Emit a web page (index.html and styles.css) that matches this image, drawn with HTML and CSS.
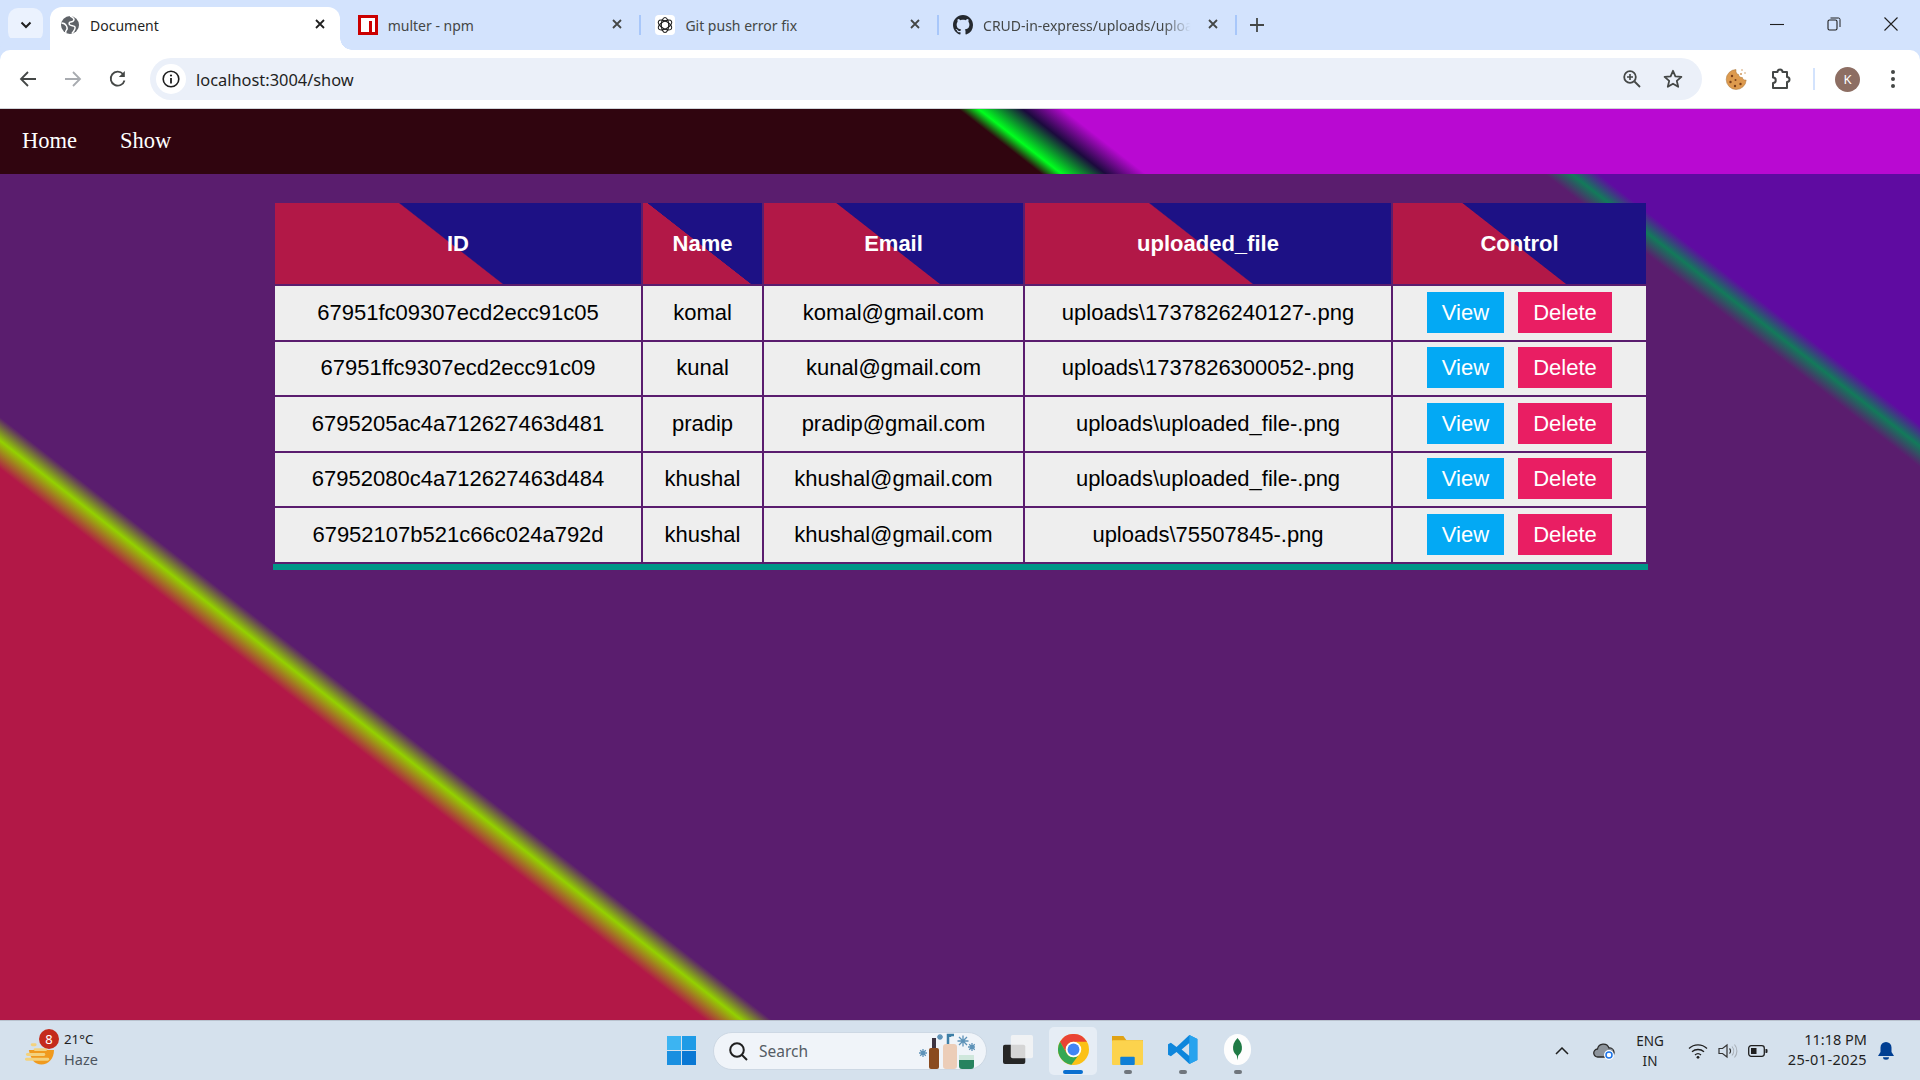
FILE: index.html
```html
<!DOCTYPE html>
<html lang="en">
<head>
<meta charset="utf-8">
<title>Document</title>
<link rel="stylesheet" href="styles.css">
</head>
<body>
<header class="browser">
  <div class="tabstrip">
    <div class="tab-menu">
      <svg class="ic16" viewBox="0 0 16 16"><path d="M3.5 5.5 8 10l4.5-4.5" fill="none" stroke="#1f1f1f" stroke-width="2"/></svg>
    </div>
    <div class="tabs">
      <div class="tab active">
        <svg class="favicon" viewBox="0 0 20 20"><circle cx="10" cy="10" r="9" fill="#5f6368"/><path d="M10 1c2 1 4 2 4 3.500S12 7 10.500 7 8.500 9 10 10s4.500.5 5 2-1 4-3 6.500M1.500 8c2 0 4 1 5 3s1 3 0 4-1 2-.500 3" fill="none" stroke="#fff" stroke-width="1.500"/></svg>
        <span class="tab-title">Document</span>
        <svg class="tab-close" viewBox="0 0 12 12"><path d="M2 2l8 8M10 2l-8 8" stroke="#1f1f1f" stroke-width="1.800"/></svg>
      </div>
      <div class="tab sep">
        <svg class="favicon" viewBox="0 0 20 20"><path d="M0 0h20v20H0z" fill="#cb0000"/><path d="M3 3h14v14h-3V6h-3v11H3z" fill="#fff"/></svg>
        <span class="tab-title">multer - npm</span>
        <svg class="tab-close" viewBox="0 0 12 12"><path d="M2 2l8 8M10 2l-8 8" stroke="#444746" stroke-width="1.800"/></svg>
      </div>
      <div class="tab sep">
        <svg class="favicon" viewBox="0 0 20 20"><rect width="20" height="20" rx="4" fill="#fff"/><g fill="none" stroke="#222" stroke-width="1.100"><ellipse cx="10" cy="10" rx="3.700" ry="7.500"/><ellipse cx="10" cy="10" rx="3.700" ry="7.500" transform="rotate(60 10 10)"/><ellipse cx="10" cy="10" rx="3.700" ry="7.500" transform="rotate(120 10 10)"/></g></svg>
        <span class="tab-title">Git push error fix</span>
        <svg class="tab-close" viewBox="0 0 12 12"><path d="M2 2l8 8M10 2l-8 8" stroke="#444746" stroke-width="1.800"/></svg>
      </div>
      <div class="tab sep">
        <svg class="favicon" viewBox="0 0 16 16"><path fill="#24292f" d="M8 0C3.580 0 0 3.580 0 8c0 3.540 2.290 6.530 5.470 7.590.400.070.550-.170.550-.380 0-.190-.010-.820-.010-1.490-2.010.370-2.530-.490-2.690-.940-.090-.230-.480-.940-.820-1.130-.280-.150-.680-.520-.010-.530.630-.010 1.080.580 1.230.820.720 1.210 1.870.870 2.330.660.070-.520.280-.870.510-1.070-1.780-.200-3.640-.890-3.640-3.950 0-.870.310-1.590.820-2.150-.080-.200-.360-1.020.080-2.120 0 0 .670-.210 2.200.820.640-.180 1.320-.270 2-.270.680 0 1.360.090 2 .270 1.530-1.040 2.200-.820 2.200-.820.440 1.100.160 1.920.080 2.120.510.560.820 1.270.820 2.150 0 3.070-1.870 3.750-3.650 3.950.290.250.540.730.540 1.480 0 1.070-.010 1.930-.010 2.200 0 .210.150.460.550.380A8.013 8.013 0 0016 8c0-4.420-3.580-8-8-8z"/></svg>
        <span class="tab-title fade">CRUD-in-express/uploads/uploa</span>
        <svg class="tab-close" viewBox="0 0 12 12"><path d="M2 2l8 8M10 2l-8 8" stroke="#444746" stroke-width="1.800"/></svg>
      </div>
      <svg class="tab-new" viewBox="0 0 14 14"><path d="M7 0v14M0 7h14" stroke="#444746" stroke-width="1.800"/></svg>
    </div>
    <div class="win-controls">
      <svg class="win-ic" viewBox="0 0 14 14"><path d="M0 7.500h14" stroke="#1f1f1f" stroke-width="1.100"/></svg>
      <svg class="win-ic" viewBox="0 0 14 14"><rect x="1" y="3" width="9" height="10" rx="1.500" fill="none" stroke="#1f1f1f" stroke-width="1.100"/><path d="M3.500 1h8A1.500 1.500 0 0 1 13 2.500V10" fill="none" stroke="#1f1f1f" stroke-width="1"/></svg>
      <svg class="win-ic" viewBox="0 0 14 14"><path d="M.5.5l13 13M13.500.5l-13 13" stroke="#1f1f1f" stroke-width="1.100"/></svg>
    </div>
  </div>
  <div class="toolbar">
    <div class="nav-btns">
      <svg class="ic18" viewBox="0 0 18 18"><path d="M17 9H2.500M9 2 2 9l7 7" fill="none" stroke="#444746" stroke-width="1.800"/></svg>
      <svg class="ic18" viewBox="0 0 18 18"><path d="M1 9h14.500M9 2l7 7-7 7" fill="none" stroke="#a8abb0" stroke-width="1.800"/></svg>
      <svg class="ic18" viewBox="0 0 18 18"><path d="M15.500 10.500A7 7 0 1 1 14 4" fill="none" stroke="#444746" stroke-width="1.800"/><path d="M15.800 1v6h-6z" fill="#444746"/></svg>
    </div>
    <div class="omnibox">
      <div class="chip">
        <svg class="ic18" viewBox="0 0 18 18"><circle cx="9" cy="9" r="7.800" fill="none" stroke="#1f1f1f" stroke-width="1.600"/><path d="M9 8v5.500" stroke="#1f1f1f" stroke-width="1.800"/><circle cx="9" cy="5.500" r="1.100" fill="#1f1f1f"/></svg>
      </div>
      <span class="url">localhost:3004/show</span>
      <div class="omni-end">
        <svg class="ic20" viewBox="0 0 20 20"><circle cx="8" cy="8" r="5.800" fill="none" stroke="#444746" stroke-width="1.800"/><path d="M12.500 12.500 18 18" stroke="#444746" stroke-width="1.800"/><path d="M8 5v6M5 8h6" stroke="#444746" stroke-width="1.600"/></svg>
        <svg class="ic20" viewBox="0 0 20 20"><path d="M10 1.800l2.400 5.600 6 .5-4.600 4 1.400 5.900L10 14.700l-5.200 3.100 1.400-5.900-4.600-4 6-.5z" fill="none" stroke="#444746" stroke-width="1.800" stroke-linejoin="round"/></svg>
      </div>
    </div>
    <div class="tool-end">
      <svg class="ic24" viewBox="0 0 24 24"><path d="M12 2.500a10 10 0 1 0 10.200 10.500c-2 .4-3.600-.8-3.800-2.500-2 .2-3.700-1-3.800-3-1.800 0-3-2.200-2.600-5z" fill="#dd9a4e" stroke="#a5743b" stroke-width=".5"/><g fill="#7a3f1a"><circle cx="8" cy="9" r="1.200"/><circle cx="6.500" cy="15" r="1.200"/><circle cx="11.500" cy="13" r="1"/><circle cx="11" cy="19" r="1.200"/><circle cx="16.500" cy="17" r="1.200"/></g><g fill="#cf9b62"><circle cx="18" cy="3" r=".8"/><circle cx="21" cy="6" r=".8"/><circle cx="17" cy="7" r="1"/></g></svg>
      <svg class="ic22" viewBox="0 0 22 22"><path d="M4 4h4.500a2.500 2.500 0 0 1 5 0H18v5a2.500 2.500 0 0 1 0 5v6H4v-5a2.500 2.500 0 0 0 0-5.500z" fill="none" stroke="#444746" stroke-width="2" stroke-linejoin="round"/></svg>
      <span class="tool-sep"></span>
      <span class="avatar">K</span>
      <svg class="dots" viewBox="0 0 4 18"><circle cx="2" cy="2" r="2" fill="#444746"/><circle cx="2" cy="9" r="2" fill="#444746"/><circle cx="2" cy="16" r="2" fill="#444746"/></svg>
    </div>
  </div>
</header>

<nav class="site-nav">
  <a class="site-link">Home</a>
  <a class="site-link">Show</a>
</nav>

<main class="page">
  <table class="data">
    <colgroup>
      <col class="c-id"><col class="c-name"><col class="c-email"><col class="c-file"><col class="c-ctrl">
    </colgroup>
    <thead>
      <tr><th>ID</th><th>Name</th><th>Email</th><th>uploaded_file</th><th>Control</th></tr>
    </thead>
    <tbody>
      <tr><td>67951fc09307ecd2ecc91c05</td><td>komal</td><td>komal@gmail.com</td><td>uploads\1737826240127-.png</td><td><div class="actions"><a class="btn view">View</a><a class="btn del">Delete</a></div></td></tr>
      <tr><td>67951ffc9307ecd2ecc91c09</td><td>kunal</td><td>kunal@gmail.com</td><td>uploads\1737826300052-.png</td><td><div class="actions"><a class="btn view">View</a><a class="btn del">Delete</a></div></td></tr>
      <tr><td>6795205ac4a712627463d481</td><td>pradip</td><td>pradip@gmail.com</td><td>uploads\uploaded_file-.png</td><td><div class="actions"><a class="btn view">View</a><a class="btn del">Delete</a></div></td></tr>
      <tr><td>67952080c4a712627463d484</td><td>khushal</td><td>khushal@gmail.com</td><td>uploads\uploaded_file-.png</td><td><div class="actions"><a class="btn view">View</a><a class="btn del">Delete</a></div></td></tr>
      <tr><td>67952107b521c66c024a792d</td><td>khushal</td><td>khushal@gmail.com</td><td>uploads\75507845-.png</td><td><div class="actions"><a class="btn view">View</a><a class="btn del">Delete</a></div></td></tr>
    </tbody>
  </table>
</main>

<footer class="taskbar">
  <div class="weather">
    <div class="weather-icon">
      <svg class="weather-svg" viewBox="0 0 30 26"><path d="M4 10h26c0 9-6 15-13 15S6 20 4 10z" fill="#f09a1e"/><g fill="#f3d27e"><rect x="6" y="3" width="6" height="3" rx="1.500"/><rect x="9" y="8" width="14" height="3" rx="1.500"/><rect x="1" y="13" width="20" height="3" rx="1.500"/><rect x="0" y="18" width="25" height="3" rx="1.500"/></g></svg>
      <span class="badge">8</span>
    </div>
    <div class="weather-text"><span class="temp">21°C</span><span class="cond">Haze</span></div>
  </div>
  <div class="task-center">
    <svg class="winlogo" viewBox="0 0 29 29"><rect width="14" height="14" fill="#3cb4f2"/><rect x="15" width="14" height="14" fill="#1f9be6"/><rect y="15" width="14" height="14" fill="#1a8fe0"/><rect x="15" y="15" width="14" height="14" fill="#0a78d4"/></svg>
    <div class="search">
      <svg class="search-ic" viewBox="0 0 20 20"><circle cx="9" cy="9" r="6.800" fill="none" stroke="#1f1f1f" stroke-width="2"/><path d="M14 14l5 5" stroke="#1f1f1f" stroke-width="2"/></svg>
      <span class="search-text">Search</span>
      <svg class="search-art" viewBox="0 0 56 36"><rect x="10" y="15" width="10" height="21" rx="2" fill="#8a4a1e"/><rect x="13" y="5" width="4" height="10" fill="#3d3340"/><rect x="24" y="11" width="14" height="25" rx="3" fill="#eccdb8"/><path d="M29 11V2h6M31 2v2" stroke="#3c7ea6" stroke-width="2.500" fill="none"/><rect x="40" y="22" width="15" height="14" rx="3" fill="#27835f"/><rect x="40" y="22" width="15" height="5" fill="#cfe7dc"/><g stroke="#5d92b8" stroke-width="1.300" fill="none"><path d="M4 16v8M0 20h8M1.200 17.200l5.600 5.600M6.800 17.200l-5.600 5.600"/><path d="M21 1v6M18 4h6M19 2l4 4M23 2l-4 4"/><path d="M44 2.500v11M38.500 8h11M40 4l8 8M48 4l-8 8"/><path d="M53 10v8M49 14h7M50.200 11.200l5.600 5.600M55.800 11.200l-5.600 5.600"/></g></svg>
    </div>
    <div class="task-apps">
      <div class="app">
        <svg class="app-ic" viewBox="0 0 32 30"><rect x="0" y="10" width="23" height="20" rx="2" fill="#262626"/><rect x="8" y="0" width="23" height="24" rx="2" fill="#f4f4f4" opacity=".85"/></svg>
      </div>
      <div class="app current">
        <svg class="app-ic" viewBox="0 0 24 24"><circle cx="12" cy="12" r="12" fill="#fbc116"/><path d="M1.600 6A12 12 0 0 1 22.400 6H12a6 6 0 0 0-5.200 9z" fill="#ea4335"/><path d="M1.600 6A12 12 0 0 0 10.400 23.900L15.600 16.800A6 6 0 0 1 6.800 15z" fill="#34a853"/><circle cx="12" cy="12" r="6" fill="#fff"/><circle cx="12" cy="12" r="4.600" fill="#4285f4"/></svg>
        <span class="run long"></span>
      </div>
      <div class="app">
        <svg class="app-ic" viewBox="0 0 30 30"><path d="M0 2h11l3 4H30v4H0z" fill="#e0a215"/><rect y="6" width="30" height="24" rx="1" fill="#fcd34d"/><rect x="8" y="22" width="14" height="8" rx="1" fill="#0f7fd6"/></svg>
        <span class="run"></span>
      </div>
      <div class="app">
        <svg class="app-ic" viewBox="0 0 24 24"><path fill-rule="evenodd" d="M17.300.800 23.500 3.800V20.200L17.300 23.200 7.400 13.900 3 17.200 .800 16V8L3 6.800 7.400 10.100zM17.300 7 11.300 12 17.300 17z" fill="#0e86dc"/><path d="M17.300.800 23.500 3.800V20.200L17.300 23.200z" fill="#28a3ee"/></svg>
        <span class="run"></span>
      </div>
      <div class="app">
        <svg class="app-ic" viewBox="0 0 28 32"><ellipse cx="14" cy="16" rx="14" ry="16" fill="#fdfdfd"/><path d="M14 4c4 4 5 8 4.500 12-.4 3-2.500 5-3.800 6.500L14 27l-.7-4.500C12 21 9.900 19 9.500 16 9 12 10 8 14 4z" fill="#1f7a45"/></svg>
        <span class="run"></span>
      </div>
    </div>
  </div>
  <div class="tray">
    <svg class="tray-chev" viewBox="0 0 14 8"><path d="M1 7l6-6 6 6" fill="none" stroke="#1f1f1f" stroke-width="1.500"/></svg>
    <svg class="tray-cloud" viewBox="0 0 22 18"><path d="M5 15a4 4 0 0 1-.5-8A6 6 0 0 1 16 6a4.500 4.500 0 0 1 1 9z" fill="#8d949c" stroke="#2b2b2b" stroke-width="1.300"/><circle cx="16" cy="13" r="5" fill="#fff"/><circle cx="16" cy="13" r="3" fill="none" stroke="#1a73e8" stroke-width="1.500"/></svg>
    <div class="lang"><span>ENG</span><span>IN</span></div>
    <svg class="tray-ic" viewBox="0 0 20 16"><path d="M1 5.500a13 13 0 0 1 18 0M4 8.800a9 9 0 0 1 12 0M7 12a4.500 4.500 0 0 1 6 0" fill="none" stroke="#1f1f1f" stroke-width="1.300"/><circle cx="10" cy="14.300" r="1.400" fill="#1f1f1f"/></svg>
    <svg class="tray-ic" viewBox="0 0 20 16"><path d="M1 5.500h3.500L9 2v12L4.500 10.500H1z" fill="none" stroke="#333" stroke-width="1.200"/><path d="M11.500 5.500a3.500 3.500 0 0 1 0 5" fill="none" stroke="#333" stroke-width="1.200"/><path d="M14 3.500a7 7 0 0 1 0 9M16.500 1.500a10 10 0 0 1 0 13" fill="none" stroke="#a9b0b8" stroke-width="1.100"/></svg>
    <svg class="tray-ic" viewBox="0 0 20 12"><rect x=".7" y=".7" width="15.600" height="10.600" rx="2.500" fill="none" stroke="#1f1f1f" stroke-width="1.300"/><rect x="3" y="3" width="5.500" height="6" fill="#1f1f1f"/><path d="M17.500 4h1a1 1 0 0 1 1 1v2a1 1 0 0 1-1 1h-1z" fill="#1f1f1f"/></svg>
    <div class="clock"><span>11:18 PM</span><span class="date">25-01-2025</span></div>
    <svg class="bell" viewBox="0 0 16 18"><path d="M8 0a5.500 5.500 0 0 1 5.500 5.500V10L16 14H0l2.500-4V5.500A5.500 5.500 0 0 1 8 0z" fill="#003e92"/><path d="M5 15.300h6a3 2.500 0 0 1-6 0z" fill="#003e92"/></svg>
  </div>
</footer>
</body>
</html>
```

FILE: styles.css
```css
* { box-sizing: border-box; }
html, body { height: 100%; }
body {
  margin: 0;
  height: 1080px;
  overflow: hidden;
  display: flex;
  flex-direction: column;
  font-family: "Liberation Sans", Arial, sans-serif;
}

/* browser chrome */
.browser { flex: none; font-family: "Noto Sans", sans-serif; }
.tabstrip {
  height: 50px;
  background: #d3e3fd;
  display: flex;
  position: relative;
}
.tab-menu {
  width: 35px;
  height: 34px;
  margin: 8px 0 0 8px;
  border-radius: 10px;
  background: #ebf2fe;
  display: flex;
  align-items: center;
  justify-content: center;
  flex: none;
}
.ic16 { width: 16px; height: 16px; }
.tabs { display: flex; margin-left: 1px; flex: 1; }
.tab {
  width: 297.700px;
  flex: none;
  height: 50px;
  display: flex;
  align-items: center;
  padding: 0 16px 0 16px;
  position: relative;
  color: #444746;
  font-size: 14px;
}
.tab.active { color: #1f1f1f; z-index: 1; }
.tab.active::before {
  content: "";
  position: absolute;
  left: 6px;
  right: 2px;
  top: 7px;
  bottom: 0;
  background: #fff;
  border-radius: 12px 12px 0 0;
  z-index: -1;
}
.tab.active::after {
  content: "";
  position: absolute;
  right: -10px;
  bottom: 0;
  width: 12px;
  height: 12px;
  background: radial-gradient(circle at 100% 0, transparent 11.500px, #fff 12px);
}
.tab.sep::after {
  content: "";
  position: absolute;
  right: -2px;
  top: 15px;
  height: 20px;
  width: 2px;
  background: #a8c7fa;
}
.favicon { width: 20px; height: 20px; flex: none; }
.tab-title {
  margin-left: 10px;
  flex: 1;
  white-space: nowrap;
  overflow: hidden;
}
.tab-title.fade {
  -webkit-mask-image: linear-gradient(to right, #000 84%, transparent 97%);
  mask-image: linear-gradient(to right, #000 84%, transparent 97%);
}
.tab-close { width: 12px; height: 12px; flex: none; margin-left: 10px; margin-top: -2px; }
.tab-new { width: 14px; height: 14px; margin: 18px 0 0 15px; flex: none; }
.win-controls {
  display: flex;
  align-items: center;
  gap: 43px;
  padding: 0 22px 3px 0;
  flex: none;
  position: absolute;
  right: 0;
  top: 0;
  height: 50px;
}
.win-ic { width: 14px; height: 14px; }

.toolbar {
  height: 59px;
  background: #fff;
  border-bottom: 1px solid #d0d3d8;
  border-radius: 10px 10px 0 0;
  display: flex;
  align-items: flex-start;
  position: relative;
  box-shadow: 0 -12px 0 0 #d3e3fd;
}
.nav-btns {
  display: flex;
  gap: 27px;
  width: 150px;
  height: 58px;
  align-items: center;
  padding-left: 19px;
  flex: none;
}
.ic18 { width: 18px; height: 18px; flex: none; }
.ic20 { width: 20px; height: 20px; flex: none; }
.ic22 { width: 22px; height: 22px; flex: none; }
.ic24 { width: 24px; height: 24px; flex: none; }
.omnibox {
  width: 1552px;
  height: 42px;
  margin-top: 8px;
  background: #ebf0f9;
  border-radius: 21px;
  display: flex;
  align-items: center;
  padding-left: 6px;
  flex: none;
}
.chip {
  width: 30px;
  height: 30px;
  background: #fff;
  border-radius: 50%;
  display: flex;
  align-items: center;
  justify-content: center;
  flex: none;
}
.url { margin-left: 10px; font-size: 16.400px; color: #1f1f1f; }
.omni-end {
  margin-left: auto;
  display: flex;
  gap: 21px;
  padding-right: 19px;
  align-items: center;
}
.tool-end {
  display: flex;
  align-items: center;
  height: 58px;
  padding-left: 22px;
  flex: 1;
}
.tool-end .ic22 { margin-left: 21px; }
.tool-sep {
  width: 2px;
  height: 22px;
  background: #d3e3fd;
  margin-left: 22px;
}
.avatar {
  width: 25px;
  height: 25px;
  border-radius: 50%;
  background: #8d6e63;
  color: #fff;
  font-size: 13px;
  display: flex;
  align-items: center;
  justify-content: center;
  margin-left: 20px;
}
.dots { width: 4px; height: 18px; margin-left: 31px; }

/* site nav */
.site-nav {
  flex: none;
  height: 65px;
  display: flex;
  align-items: center;
  gap: 43px;
  padding: 0 0 2px 22px;
  background: linear-gradient(38deg, #30050f 52%, #00ff1e 53%, #1c0a3e 55.200%, #b909d2 57.200%);
}
.site-link {
  font-family: "Liberation Serif", "Times New Roman", serif;
  font-size: 22.500px;
  color: #fff;
}

/* main page */
.page {
  flex: 1;
  min-height: 0;
  padding: 27px 0 0 273px;
  background: linear-gradient(38deg, #b21847 23.500%, #93d100 24.700%, #5a1d6e 25.700%, #5a1d6e 87.500%, #127a5a 88.400%, #5f0ba1 89.300%);
}
.data {
  width: 1375px;
  table-layout: fixed;
  border-collapse: separate;
  border-spacing: 2px;
  border-bottom: 6px solid #009688;
  font-size: 22px;
}
.c-id { width: 366px; }
.c-name { width: 119px; }
.c-email { width: 259px; }
.c-file { width: 366px; }
.c-ctrl { width: 253px; }
.data th {
  height: 81px;
  padding: 0;
  color: #fff;
  font-weight: 700;
  background: linear-gradient(38deg, #b21847 48.300%, #1d1185 48.700%);
}
.data td {
  padding: 0;
  text-align: center;
  background: #eee;
  color: #000;
}
.data tbody tr:nth-child(odd) td { height: 54px; }
.data tbody tr:nth-child(even) td { height: 53px; padding-bottom: 2px; }
.data tbody tr:nth-child(odd) .actions { margin-bottom: 1px; }
.actions { display: flex; justify-content: center; gap: 14px; }
.btn {
  height: 41px;
  display: flex;
  align-items: center;
  justify-content: center;
  color: #fff;
}
.view { width: 77px; background: #03a9f4; }
.del { width: 94px; background: #e91e63; }

/* taskbar */
.taskbar {
  flex: none;
  height: 60px;
  background: #d5e1ed;
  border-top: 1px solid #b9c2ce;
  display: flex;
  font-family: "Noto Sans", sans-serif;
  color: #1f1f1f;
}
.weather {
  width: 667px;
  flex: none;
  display: flex;
  align-items: center;
  padding-left: 25px;
}
.weather-icon { position: relative; width: 29px; height: 26px; margin-top: 4px; }
.weather-svg { width: 29px; height: 26px; display: block; }
.badge {
  position: absolute;
  right: -5px;
  top: -11px;
  width: 20px;
  height: 20px;
  border-radius: 50%;
  background: #c42b1c;
  color: #fff;
  font-size: 13px;
  display: flex;
  align-items: center;
  justify-content: center;
}
.weather-text {
  display: flex;
  flex-direction: column;
  margin: 0 0 4px 10px;
  font-size: 13.300px;
  line-height: 20px;
}
.cond { color: #4d5560; font-size: 14.500px; }
.task-center { display: flex; align-items: center; flex: none; }
.winlogo { width: 29px; height: 29px; flex: none; }
.search {
  width: 274px;
  height: 38px;
  margin-left: 17px;
  background: #f0f4f9;
  border-radius: 19px;
  border: 1px solid #cdd8e4;
  display: flex;
  align-items: center;
  padding-left: 14px;
  flex: none;
}
.search-ic { width: 20px; height: 20px; flex: none; }
.search-text { margin-left: 11px; font-size: 15.500px; color: #555c64; }
.search-art { width: 56px; height: 36px; margin-left: auto; margin-right: 11px; flex: none; }
.task-apps { display: flex; margin-left: 4px; }
.app {
  width: 55px;
  height: 48px;
  display: flex;
  align-items: center;
  justify-content: center;
  position: relative;
}
.app.current {
  width: 48px;
  margin: 0 3px 0 3px;
  background: #e6edf5;
  border-radius: 5px;
}
.app-ic { width: 31px; height: 31px; margin-top: -2px; }
.run {
  position: absolute;
  bottom: 1px;
  left: 50%;
  transform: translateX(-50%);
  width: 8px;
  height: 4px;
  border-radius: 2px;
  background: #70767d;
}
.run.long { width: 20px; background: #0a6fd0; }
.tray {
  margin-left: auto;
  display: flex;
  align-items: center;
  padding-right: 26px;
  flex: none;
}
.tray-chev { width: 14px; height: 8px; }
.tray-cloud { width: 22px; height: 18px; margin-left: 24px; }
.lang {
  width: 44px;
  margin-left: 13px;
  display: flex;
  flex-direction: column;
  align-items: center;
  font-size: 13.500px;
  line-height: 20px;
}
.tray-ic { width: 20px; height: 16px; margin-left: 10px; }
.lang + .tray-ic { margin-left: 16px; }
.clock {
  display: flex;
  flex-direction: column;
  align-items: flex-end;
  margin: 0 0 4px 13px;
  font-size: 14.500px;
  line-height: 20px;
  width: 86px;
}
.date { letter-spacing: .35px; }
.bell { width: 16px; height: 18px; margin-left: 11px; }
```
